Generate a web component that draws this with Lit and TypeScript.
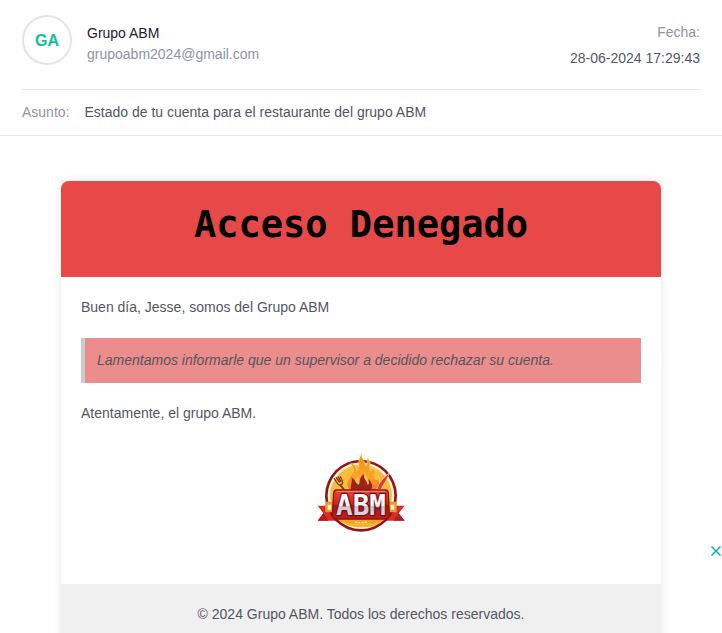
import { LitElement, html, css } from "lit";
import { customElement, property } from "lit/decorators.js";

@customElement("abm-logo")
class AbmLogo extends LitElement {
  static styles = css`
    :host { display: block; }
    .logo { display: block; width: 110px; height: 95px; }
    .word { font: bold 83px "Liberation Sans Narrow", "DejaVu Sans Mono", monospace; }
  `;

  render() {
    return html`
      <svg class="logo" viewBox="3 0 330 285" role="img" aria-label="Grupo ABM">
        <defs>
          <linearGradient id="flame" x1="0" y1="0" x2="0" y2="1">
            <stop offset="0" stop-color="#f78a1c" />
            <stop offset="0.6" stop-color="#fba524" />
            <stop offset="1" stop-color="#f4761c" />
          </linearGradient>
          <linearGradient id="plate" x1="0" y1="0" x2="0" y2="1">
            <stop offset="0" stop-color="#ee4438" />
            <stop offset="0.5" stop-color="#d3241f" />
            <stop offset="0.52" stop-color="#a81419" />
            <stop offset="1" stop-color="#c41d1e" />
          </linearGradient>
          <linearGradient id="steel" x1="0" y1="0" x2="0" y2="1">
            <stop offset="0" stop-color="#ffffff" />
            <stop offset="0.5" stop-color="#f2f0f0" />
            <stop offset="0.53" stop-color="#cfc9ca" />
            <stop offset="1" stop-color="#e6e2e2" />
          </linearGradient>
        </defs>
        <path d="M38 182H96V227H38L55 205Z" fill="#d92c28" />
        <path d="M299 182H240V227H299L281 205Z" fill="#d92c28" />
        <path d="M38 227L55 205L70 227ZM299 227L281 205L266 227Z" fill="#b51d20" />
        <circle cx="168" cy="152" r="108" fill="#8f151b" />
        <circle cx="168" cy="152" r="100" fill="#fff3dc" />
        <circle cx="168" cy="152" r="93" fill="#f9bd3c" />
        <path d="M82 205Q110 246 168 247T254 205Z" fill="#f5a323" />
        <path d="M61 170H86V202H61ZM250 170H275V202H250Z" fill="#e99b25" />
        <path d="M68 179H79V194H68ZM257 179H268V194H257Z" fill="#fff3d2" />
        <path d="M133 136C119 116 128 99 141 85C151 73 141 65 137 55C151 59 156 69 155 79C167 66 155 48 170 26C168 42 181 47 182 64C189 56 185 48 188 39C202 55 190 66 196 77C203 78 204 72 202 66C217 79 206 91 211 103C217 106 221 101 220 94C230 115 218 127 212 137Z"
          fill="url(#flame)" stroke="#ffd66a" stroke-width="2" />
        <path d="M147 135C138 120 153 107 157 94C165 104 158 111 169 117C178 101 170 91 181 80C180 96 195 100 190 119C195 119 197 114 197 108C208 121 199 132 193 137Z" fill="#fbc548" />
        <path d="M139 138C134 123 144 109 139 97C153 104 149 115 161 119C168 108 160 98 178 86C173 103 187 105 188 120C194 117 193 108 188 102C205 112 205 128 195 138Z" fill="#9c231b" />
        <path d="M106 120L124 143" stroke="#85331b" stroke-width="6" stroke-linecap="round" />
        <path d="M88 101L96 114Q101 122 107 120Q115 117 112 109L106 95M94 98L103 111M100 96L107 109" fill="none" stroke="#85331b" stroke-width="4" stroke-linecap="round" />
        <path d="M215 132C222 112 237 98 252 84C250 101 236 115 227 135Z" fill="#e33a2e" stroke="#ffd7b0" stroke-width="2" />
        <path d="M94 135H242Q249 136 250 144L253 210Q252 221 241 222H95Q83 221 82 210L86 144Q87 136 94 135Z" fill="url(#plate)" stroke="#8c1218" stroke-width="4" />
        <path d="M95 139H240" stroke="#ff8a73" stroke-width="3" />
        <text class="word" x="168" y="211" text-anchor="middle" fill="#65131a" stroke="#65131a" stroke-width="7" stroke-linejoin="round">ABM</text>
        <text class="word" x="168" y="210" text-anchor="middle" fill="url(#steel)">ABM</text>
        <path d="M110 230Q168 242 226 230Q205 246 168 246T110 230Z" fill="#f9b32f" />
        <path d="M151 232h6M160 233h6M170 233h6M179 232h6" stroke="#fff1c7" stroke-width="4" />
      </svg>
    `;
  }
}

@customElement("app-root")
class AppRoot extends LitElement {
  @property() sender = "Grupo ABM";
  @property() address = "grupoabm2024@gmail.com";
  @property() sent = "28-06-2024 17:29:43";
  @property() subject = "Estado de tu cuenta para el restaurante del grupo ABM";

  static styles = css`
    :host {
      display: block;
      position: relative;
      height: 100vh;
      overflow: auto;
      scrollbar-width: none;
      background: #fff;
      color: #54565f;
      font: 14px/21px "Liberation Sans", Arial, sans-serif;
    }
    p, h1, blockquote { margin: 0; }
    .meta { padding: 15px 22px 0; border-bottom: 1px solid #e8e8ed; }
    .top {
      display: flex;
      justify-content: space-between;
      padding-bottom: 18px;
      border-bottom: 1px solid #e8e8ed;
    }
    .from { display: flex; gap: 15px; }
    .avatar {
      box-sizing: border-box;
      width: 50px;
      height: 50px;
      border: 2px solid #e4e3f0;
      border-radius: 50%;
      color: #0fc19a;
      font-size: 16px;
      font-weight: bold;
      line-height: 48px;
      text-align: center;
    }
    .who { padding-top: 8px; }
    .name { color: #1f2029; }
    .muted { color: #8f92a3; }
    .date { padding-top: 4px; line-height: 26px; text-align: right; }
    .subject { display: flex; gap: 15px; padding: 12px 0; }
    .letter { padding: 45px 20px; }
    .card {
      max-width: 600px;
      margin: 0 auto;
      overflow: hidden;
      border-radius: 8px;
      box-shadow: 0 0 10px rgba(0, 0, 0, 0.1);
    }
    .title {
      padding: 20px 20px 28px;
      background: #e74949;
      color: #000;
      font: bold 37px/48px "DejaVu Sans Mono", monospace;
      text-align: center;
    }
    .body { padding: 20px; }
    .notice {
      margin: 20px 0;
      padding: 12px;
      border-left: 4px solid #ccc;
      background: #eb8d8d;
      font-style: italic;
    }
    .mark { display: flex; justify-content: center; padding: 21px 0 24px; }
    .foot { padding: 20px; background: #f0f0f1; text-align: center; }
    .close {
      position: absolute;
      right: 0;
      top: 545px;
      width: 12px;
      height: 12px;
      padding: 0;
      border: 0;
      background: none;
    }
    .close svg { display: block; }
  `;

  render() {
    return html`
      <header class="meta">
        <div class="top">
          <div class="from">
            <div class="avatar">GA</div>
            <div class="who">
              <div class="name">${this.sender}</div>
              <div class="muted">${this.address}</div>
            </div>
          </div>
          <div class="date">
            <div class="muted">Fecha:</div>
            <div>${this.sent}</div>
          </div>
        </div>
        <div class="subject">
          <span class="muted">Asunto:</span>
          <span>${this.subject}</span>
        </div>
      </header>
      <main class="letter">
        <article class="card">
          <h1 class="title">Acceso Denegado</h1>
          <div class="body">
            <p>Buen día, Jesse, somos del Grupo ABM</p>
            <blockquote class="notice">Lamentamos informarle que un supervisor a decidido rechazar su cuenta.</blockquote>
            <p>Atentamente, el grupo ABM.</p>
            <div class="mark"><abm-logo></abm-logo></div>
          </div>
          <footer class="foot">© 2024 Grupo ABM. Todos los derechos reservados.</footer>
        </article>
      </main>
      <button class="close" aria-label="Cerrar">
        <svg width="12" height="12" viewBox="0 0 12 12">
          <path d="M2 2L10 10M10 2L2 10" stroke="#12aacb" stroke-width="1.5" stroke-linecap="square" />
        </svg>
      </button>
    `;
  }
}
